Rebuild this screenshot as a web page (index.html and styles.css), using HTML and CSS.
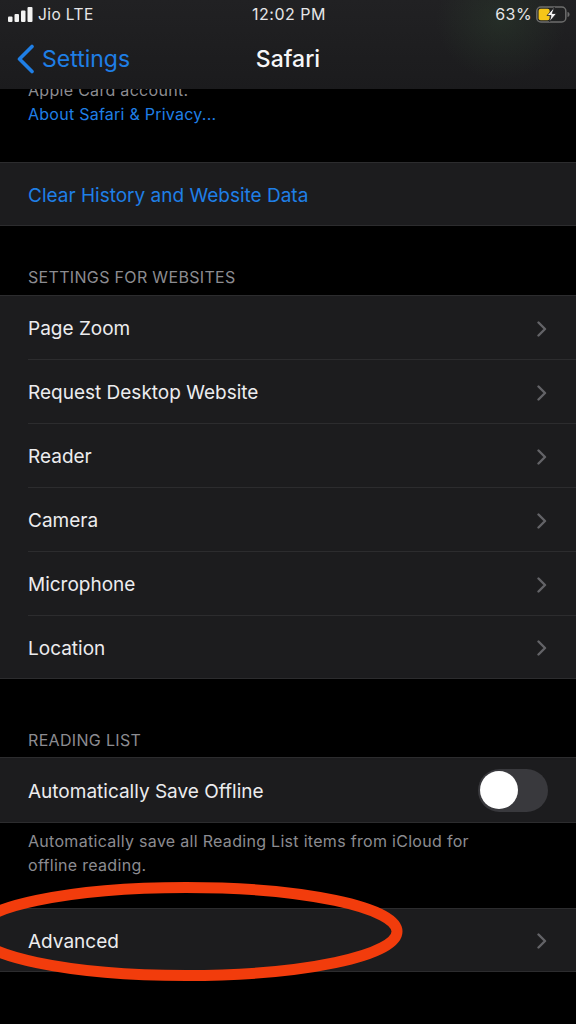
FILE: index.html
```html
<!DOCTYPE html>
<html lang="en">
<head>
<meta charset="utf-8">
<title>Safari Settings</title>
<link rel="stylesheet" href="styles.css">
</head>
<body>
<div class="phone">
  <header class="top">
    <div class="glow"></div>
    <div class="status">
      <div class="status-left">
        <svg class="signal" width="25" height="15" viewBox="0 0 25 15"><rect x="0" y="9.500" width="4.500" height="5.500" rx="1"/><rect x="6.500" y="7" width="4.500" height="8" rx="1"/><rect x="13" y="3.500" width="4.500" height="11.500" rx="1"/><rect x="19.500" y="0" width="5" height="15" rx="1"/></svg>
        <span>Jio LTE</span>
      </div>
      <div class="status-time">12:02 PM</div>
      <div class="status-right">
        <span>63%</span>
        <svg class="battery" width="34" height="17" viewBox="0 0 34 17"><rect x="0.8" y="1" width="29" height="15" rx="4" fill="none" stroke="#6d6d6d" stroke-width="1.500"/><rect x="2.600" y="2.800" width="11" height="11.400" rx="2" fill="#f5c518"/><path d="M31.500 6v5c1.300-.3 2-1.200 2-2.500s-.7-2.200-2-2.500z" fill="#6d6d6d"/><path d="M18.500 1 11 9.500h4L13.500 15.800 20.500 7.500h-4.200z" fill="#f4f4f4" stroke="#1d1d1f" stroke-width=".8"/></svg>
      </div>
    </div>
    <nav class="nav">
      <div class="back">
        <svg width="20" height="30" viewBox="0 0 20 30"><path d="M16 2.500 3.500 15 16 27.500" fill="none" stroke="#1f7fe6" stroke-width="3.600" stroke-linecap="round" stroke-linejoin="round"/></svg>
        <span>Settings</span>
      </div>
      <h1 class="title">Safari</h1>
    </nav>
  </header>
  <main class="content">
    <p class="note first">Apple Card account.</p>
    <p class="link-line">About Safari &amp; Privacy...</p>

    <section class="group clear">
      <div class="row action">Clear History and Website Data</div>
    </section>

    <h2 class="label">SETTINGS FOR WEBSITES</h2>
    <section class="group">
      <div class="row"><span>Page Zoom</span><svg class="chev" width="10" height="16" viewBox="0 0 10 16"><path d="M1.500 1.500 8 8l-6.500 6.500"/></svg></div>
      <div class="row"><span>Request Desktop Website</span><svg class="chev" width="10" height="16" viewBox="0 0 10 16"><path d="M1.500 1.500 8 8l-6.500 6.500"/></svg></div>
      <div class="row"><span>Reader</span><svg class="chev" width="10" height="16" viewBox="0 0 10 16"><path d="M1.500 1.500 8 8l-6.500 6.500"/></svg></div>
      <div class="row"><span>Camera</span><svg class="chev" width="10" height="16" viewBox="0 0 10 16"><path d="M1.500 1.500 8 8l-6.500 6.500"/></svg></div>
      <div class="row"><span>Microphone</span><svg class="chev" width="10" height="16" viewBox="0 0 10 16"><path d="M1.500 1.500 8 8l-6.500 6.500"/></svg></div>
      <div class="row"><span>Location</span><svg class="chev" width="10" height="16" viewBox="0 0 10 16"><path d="M1.500 1.500 8 8l-6.500 6.500"/></svg></div>
    </section>

    <h2 class="label reading">READING LIST</h2>
    <section class="group">
      <div class="row tall"><span>Automatically Save Offline</span><div class="toggle"><div class="knob"></div></div></div>
    </section>
    <p class="note foot">Automatically save all Reading List items from iCloud for offline reading.</p>

    <section class="group">
      <div class="row"><span>Advanced</span><svg class="chev" width="10" height="16" viewBox="0 0 10 16"><path d="M1.500 1.500 8 8l-6.500 6.500"/></svg></div>
    </section>
  </main>
  <svg class="scribble" width="576" height="1024" viewBox="0 0 576 1024"><ellipse cx="186" cy="931.500" rx="211" ry="44" fill="none" stroke="#f23c0c" stroke-width="11"/></svg>
</div>
</body>
</html>
```
FILE: styles.css
```css
* { box-sizing: border-box; }
html, body { margin: 0; padding: 0; background: #000; }
body { font-family: Inter, "Liberation Sans", sans-serif; color: #f2f2f4; }
.phone { position: relative; width: 576px; height: 1024px; overflow: hidden; background: #000; }

.top { position: relative; z-index: 2; height: 89px; background: linear-gradient(#212123, #1b1b1d); overflow: hidden; }
.glow { position: absolute; right: 10px; top: -40px; width: 130px; height: 120px; border-radius: 50%; background: radial-gradient(closest-side, rgba(60,100,60,.2), rgba(60,100,60,0)); }
.status { position: relative; display: flex; align-items: center; justify-content: space-between; height: 28px; padding: 0 6px 0 8px; font-size: 15.500px; color: #e6e6e8; letter-spacing: .4px; }
.status-left { display: flex; align-items: center; gap: 5px; width: 160px; }
.status-left .signal { fill: #f2f2f2; }
.status-time { font-size: 16px; letter-spacing: .5px; }
.status-right { display: flex; align-items: center; justify-content: flex-end; gap: 4px; width: 160px; font-size: 16px; }
.nav { position: relative; display: flex; align-items: center; justify-content: center; height: 61px; }
.back { position: absolute; left: 16px; top: 0; height: 61px; display: flex; align-items: center; gap: 6px; color: #1f7fe6; font-size: 23px; }
.title { margin: 0; font-size: 23px; font-weight: 500; color: #f6f6f8; }

.content { position: relative; z-index: 1; margin-top: -11px; }
.note { margin: 0; padding: 0 28px; font-size: 16px; line-height: 24px; color: #8c8c91; letter-spacing: .3px; }
.first { height: 24px; }
.link-line { margin: 0; padding: 0 28px; font-size: 16px; line-height: 24px; color: #1f7fe6; letter-spacing: .25px; }

.group { background: #1c1c1e; border-top: 1px solid #2c2c2e; border-bottom: 1px solid #2c2c2e; }
.clear { margin-top: 36px; }
.row { display: flex; align-items: center; justify-content: space-between; height: 64px; margin-left: 28px; padding: 2px 29px 0 0; font-size: 19px; border-top: 1px solid #2c2c2e; color: #ececee; }
.row:first-child { border-top: 0; height: 63px; }
.row:last-child { height: 63px; }
.row:first-child:last-child { height: 62px; }
.row.tall:first-child:last-child { height: 64px; }
.action { color: #1f7fe6; }
.label { margin: 0; padding: 0 28px 8px; height: 69px; display: flex; align-items: flex-end; font-size: 16px; font-weight: 400; color: #8c8c91; letter-spacing: .33px; }
.reading { height: 78px; padding-bottom: 7px; }
.chev { fill: none; stroke: #636367; stroke-width: 2.400; stroke-linecap: round; stroke-linejoin: round; }
.toggle { width: 70px; height: 43px; border-radius: 22px; background: #39393d; display: flex; align-items: center; padding-left: 2px; margin: 0 -1px 2px 0; }
.knob { width: 38px; height: 38px; border-radius: 50%; background: #fff; }
.foot { padding: 6px 100px 31px 28px; }
.scribble { position: absolute; left: 0; top: 0; z-index: 3; pointer-events: none; }
```
